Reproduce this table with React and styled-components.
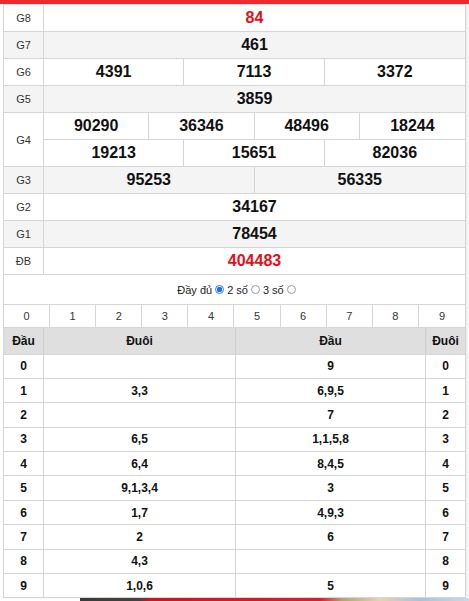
import React, { useState } from "react";
import styled, { createGlobalStyle } from "styled-components";

const GlobalStyle = createGlobalStyle`
  html, body {
    margin: 0;
    padding: 0;
    background: #fff;
    font-family: "Liberation Sans", Arial, sans-serif;
    color: #222;
  }
  * { box-sizing: border-box; }
`;

const TopBar = styled.div`
  height: 4px;
  background-color: #ee2a30;
`;

const Wrapper = styled.section`
  width: 463px;
  margin-left: 3px;
  border-top: 1px solid #e2e2e2;
  border-left: 1px solid #d5d5d5;
  border-right: 1px solid #d5d5d5;
  box-shadow: 2px 0 2px rgba(0, 0, 0, 0.08);
  background: #fff;
`;

const PrizeRow = styled.div`
  display: grid;
  grid-template-columns: 40px 1fr;
  border-bottom: 1px solid #d5d5d5;
  background-color: ${({ $shade }) => ($shade ? "#f4f4f4" : "#fff")};
`;

const Label = styled.div`
  display: flex;
  align-items: center;
  justify-content: center;
  border-right: 1px solid #d5d5d5;
  font-size: 11px;
  color: #333;
`;

const Lines = styled.div`
  display: flex;
  flex-direction: column;
`;

const Line = styled.div`
  display: grid;
  grid-template-columns: repeat(${({ $cols }) => $cols}, 1fr);
  & + & {
    border-top: 1px solid #d5d5d5;
  }
`;

const Prize = styled.div`
  height: 26px;
  display: flex;
  align-items: center;
  justify-content: center;
  font-size: 16px;
  font-weight: bold;
  color: ${({ $red }) => ($red ? "#e2101a" : "#111")};
  border-right: 1px solid #d5d5d5;
  &:last-child {
    border-right: none;
  }
`;

const Filter = styled.div`
  height: 30px;
  display: flex;
  align-items: center;
  justify-content: center;
  gap: 3px;
  font-size: 11px;
  color: #222;
  border-bottom: 1px solid #d5d5d5;
  padding-left: 4px;
`;

const Option = styled.label`
  display: flex;
  align-items: center;
  gap: 3px;
`;

const Radio = styled.input`
  appearance: none;
  margin: 0;
  width: 9px;
  height: 9px;
  border-radius: 50%;
  border: 1px solid ${({ checked }) => (checked ? "#2b7fe0" : "#9a9a9a")};
  background: ${({ checked }) =>
    checked ? "radial-gradient(circle, #1a73e8 0 2.6px, #fff 3px)" : "#fff"};
`;

const DigitBar = styled.div`
  display: grid;
  grid-template-columns: repeat(10, 1fr);
  border-bottom: 1px solid #d5d5d5;
`;

const Digit = styled.div`
  height: 22px;
  display: flex;
  align-items: center;
  justify-content: center;
  font-size: 11px;
  color: #333;
  border-right: 1px solid #d5d5d5;
  &:last-child {
    border-right: none;
  }
`;

const LotoRow = styled.div`
  display: grid;
  grid-template-columns: 40px 192px 190px 1fr;
  background-color: ${({ $head }) => ($head ? "#dfdfdf" : "#fff")};
  border-bottom: 1px solid #d5d5d5;
`;

const LotoCell = styled.div`
  height: ${({ $head }) => ($head ? "25.5px" : "23.4px")};
  display: flex;
  align-items: center;
  justify-content: center;
  font-size: 12px;
  font-weight: bold;
  color: #111;
  border-right: 1px solid ${({ $head }) => ($head ? "#cfcfcf" : "#d5d5d5")};
  &:last-child {
    border-right: none;
  }
`;

const Banner = styled.div`
  margin-left: 80px;
  height: 12px;
  background: linear-gradient(
    90deg,
    #3a3a3a 0,
    #4a4040 60px,
    #c81820 70px,
    #d8202a 240px,
    #b9a070 262px,
    #e7d3b0 300px,
    #a8c2dc 340px,
    #c9d9ea 389px
  );
`;

const prizes = [
  { label: "G8", lines: [["84"]], red: true },
  { label: "G7", lines: [["461"]] },
  { label: "G6", lines: [["4391", "7113", "3372"]] },
  { label: "G5", lines: [["3859"]] },
  { label: "G4", lines: [["90290", "36346", "48496", "18244"], ["19213", "15651", "82036"]] },
  { label: "G3", lines: [["95253", "56335"]] },
  { label: "G2", lines: [["34167"]] },
  { label: "G1", lines: [["78454"]] },
  { label: "ĐB", lines: [["404483"]], red: true },
];

const loto = [
  ["0", "", "9", "0"],
  ["1", "3,3", "6,9,5", "1"],
  ["2", "", "7", "2"],
  ["3", "6,5", "1,1,5,8", "3"],
  ["4", "6,4", "8,4,5", "4"],
  ["5", "9,1,3,4", "3", "5"],
  ["6", "1,7", "4,9,3", "6"],
  ["7", "2", "6", "7"],
  ["8", "4,3", "", "8"],
  ["9", "1,0,6", "5", "9"],
];

const App = () => {
  const [mode, setMode] = useState("2");

  return (
    <>
      <GlobalStyle />
      <TopBar />
      <Wrapper>
        {prizes.map((p, i) => (
          <PrizeRow key={p.label} $shade={i % 2 === 1}>
            <Label>{p.label}</Label>
            <Lines>
              {p.lines.map((line, j) => (
                <Line key={j} $cols={line.length}>
                  {line.map((n) => (
                    <Prize key={n} $red={p.red}>{n}</Prize>
                  ))}
                </Line>
              ))}
            </Lines>
          </PrizeRow>
        ))}

        <Filter>
          <Option>
            Đầy đủ
            <Radio type="radio" name="mode" checked={mode === "2"} onChange={() => setMode("2")} />
          </Option>
          <Option>
            2 số
            <Radio type="radio" name="mode" checked={mode === "x"} onChange={() => setMode("x")} />
          </Option>
          <Option>
            3 số
            <Radio type="radio" name="mode" checked={mode === "3"} onChange={() => setMode("3")} />
          </Option>
        </Filter>

        <DigitBar>
          {[0, 1, 2, 3, 4, 5, 6, 7, 8, 9].map((d) => (
            <Digit key={d}>{d}</Digit>
          ))}
        </DigitBar>

        <LotoRow $head>
          <LotoCell $head>Đầu</LotoCell>
          <LotoCell $head>Đuôi</LotoCell>
          <LotoCell $head>Đầu</LotoCell>
          <LotoCell $head>Đuôi</LotoCell>
        </LotoRow>
        {loto.map((r) => (
          <LotoRow key={r[0]}>
            {r.map((c, k) => (
              <LotoCell key={k}>{c}</LotoCell>
            ))}
          </LotoRow>
        ))}
      </Wrapper>
      <Banner />
    </>
  );
};

export default App;
